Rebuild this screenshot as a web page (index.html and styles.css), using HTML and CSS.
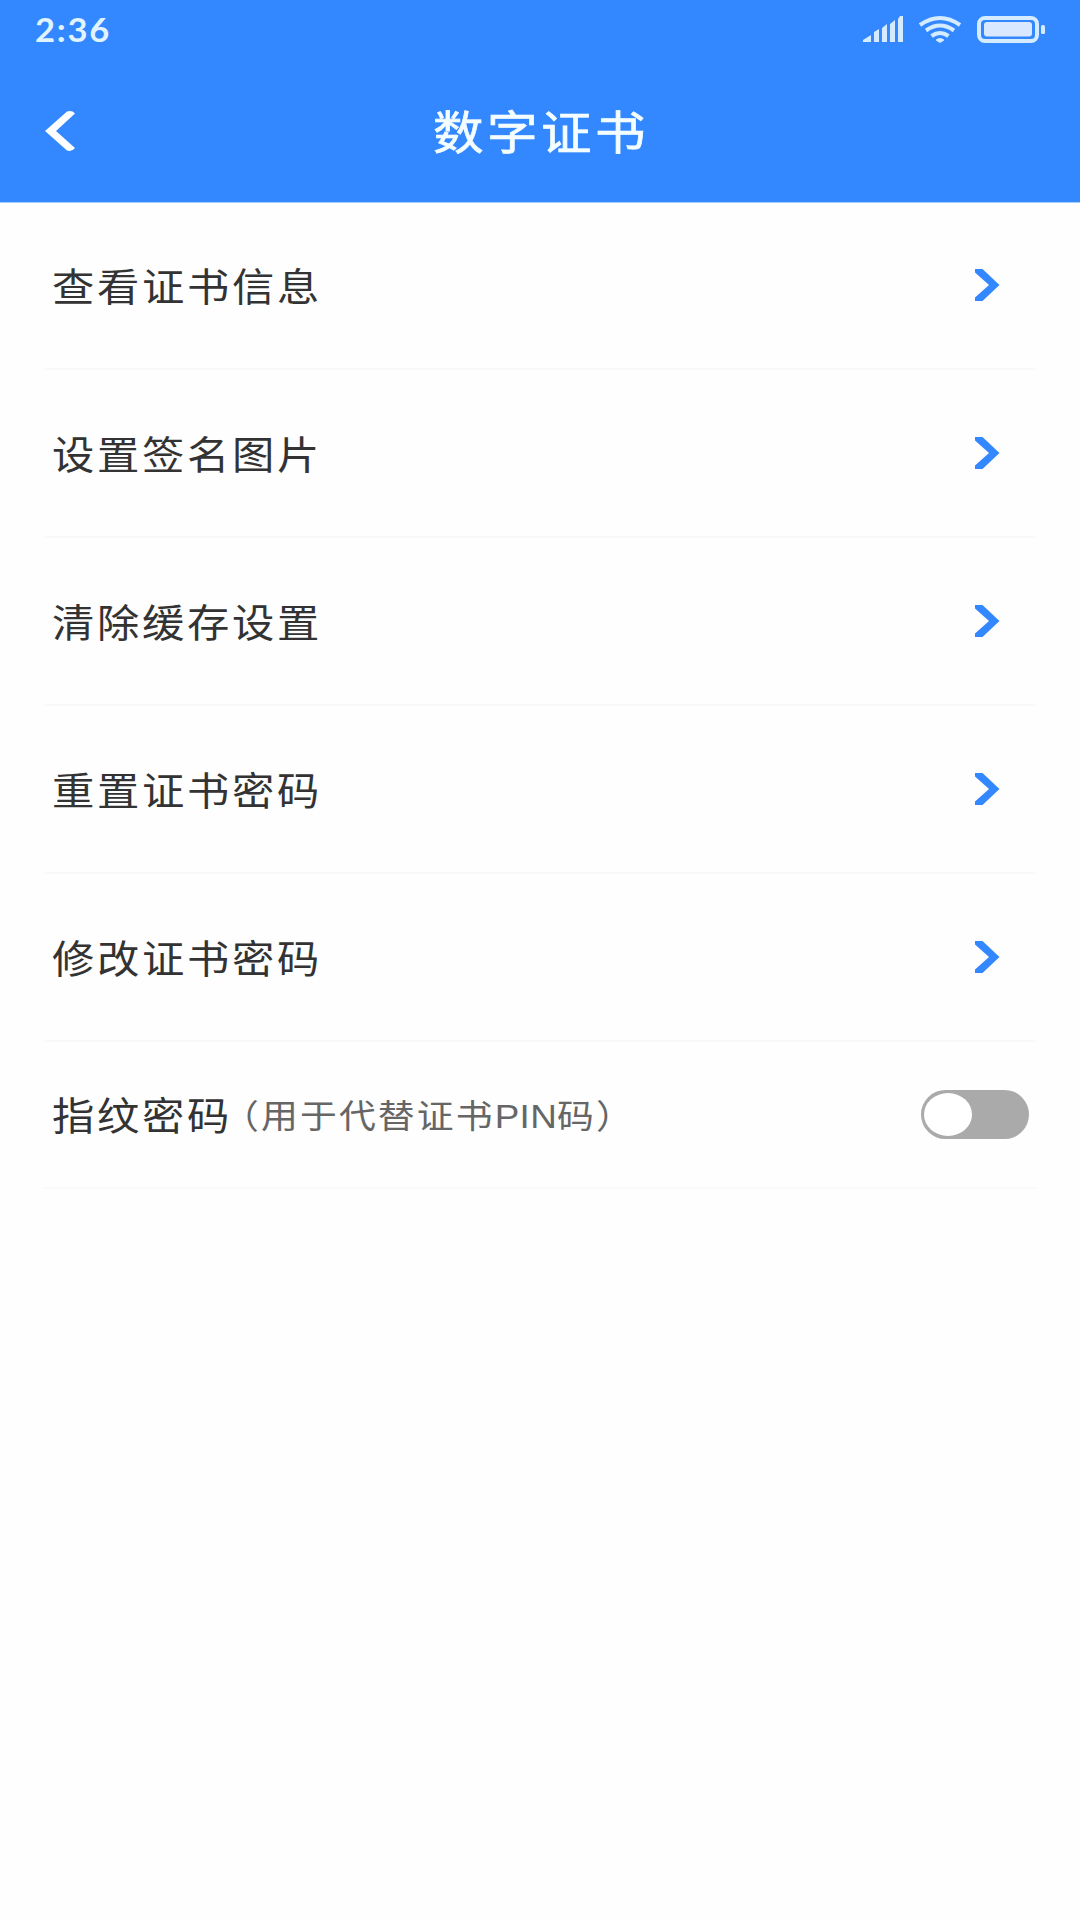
FILE: index.html
```html
<!DOCTYPE html>
<html lang="zh-CN">
<head>
    <meta charset="UTF-8">
    <title>数字证书</title>
    <link rel="stylesheet" href="styles.css">
</head>
<body>
    <header class="header">
        <div class="status">
            <span class="time">2:36</span>
            <svg class="status-icons" width="184" height="30" viewBox="862 14 184 30">
                <!--信号-->
                <path fill="#d5ebff" d="M863 42v-2l8-5v7zM874 42v-10l5-3v13zM882 42v-14l5-4v18zM890 42v-18l5-4v22zM898 42v-23l2-3h3v26z"/>
                <!--wifi-->
                <g fill="none" stroke="#d5ebff" stroke-width="4">
                    <path d="M920 25q20-14 40 0M926 30.500q14-10 28 0M931.500 36q8.500-6 17 0"/>
                </g>
                <path fill="#d5ebff" d="M936 39.500q4-3 8 0v1l-4 2.500l-4-2.500z"/>
                <!--电池-->
                <rect x="979" y="18" width="58" height="23" rx="6" fill="none" stroke="#d5ebff" stroke-width="4"/>
                <rect x="984" y="22" width="48" height="14.500" rx="3" fill="#d9e8ff"/>
                <rect x="1041" y="25" width="4" height="9" rx="1.500" fill="#d5ebff"/>
            </svg>
        </div>
        <div class="nav">
            <svg class="back" width="32" height="42" viewBox="0 0 32 42">
                <path fill="#fff" d="M0 21L22 1.500Q27 0 30 3.500L11 21L30 38Q27 42 22 40.500z"/>
            </svg>
            <h1 class="title">数字证书</h1>
        </div>
    </header>

    <ul class="list">
        <li class="row">
            <span class="label">查看证书信息</span>
            <svg class="arrow" width="26" height="34" viewBox="0 0 26 34"><path d="M1 1h7.500l17 16l-17 16h-7.500v-3.500l14-12.500l-14-12.500z"/></svg>
        </li>
        <li class="row">
            <span class="label">设置签名图片</span>
            <svg class="arrow" width="26" height="34" viewBox="0 0 26 34"><path d="M1 1h7.500l17 16l-17 16h-7.500v-3.500l14-12.500l-14-12.500z"/></svg>
        </li>
        <li class="row">
            <span class="label">清除缓存设置</span>
            <svg class="arrow" width="26" height="34" viewBox="0 0 26 34"><path d="M1 1h7.500l17 16l-17 16h-7.500v-3.500l14-12.500l-14-12.500z"/></svg>
        </li>
        <li class="row">
            <span class="label">重置证书密码</span>
            <svg class="arrow" width="26" height="34" viewBox="0 0 26 34"><path d="M1 1h7.500l17 16l-17 16h-7.500v-3.500l14-12.500l-14-12.500z"/></svg>
        </li>
        <li class="row">
            <span class="label">修改证书密码</span>
            <svg class="arrow" width="26" height="34" viewBox="0 0 26 34"><path d="M1 1h7.500l17 16l-17 16h-7.500v-3.500l14-12.500l-14-12.500z"/></svg>
        </li>
        <li class="row row-switch">
            <span class="label">指纹密码<small class="tip">（用于代替证书<span class="pin">PIN</span>码）</small></span>
            <span class="switch"><i class="knob"></i></span>
        </li>
    </ul>
</body>
</html>
```
FILE: styles.css
```css
html,body,h1,ul,li{ margin: 0; padding: 0;}
body{ height: 1920px; background: #fefefe; font-family: "Liberation Sans","Noto Sans CJK SC",sans-serif;}
svg{ display: block;}

.header{ height: 203px; background: #3388ff; border-bottom: 1px solid #a9cdfb; box-sizing: border-box;}
.status{ display: flex; justify-content: space-between; height: 60px; padding: 0 34px 0 35px;}
.time{ line-height: 59px; font-family: Lato,sans-serif; font-size: 32px; font-weight: bold; letter-spacing: 1.6px; color: #e0f3ff; transform: scaleX(1.08); transform-origin: 0 50%;}
.status-icons{ margin-top: 14px;}
.nav{ display: grid; grid-template-columns: 32px 1fr 32px; align-items: center; height: 142px; padding: 0 45px;}
.back{ margin-bottom: 1px;}
.title{ padding: 4px 0 0 2px; text-align: center; font-size: 46px; font-weight: normal; line-height: 72px; letter-spacing: 3.1px; color: #f4fdff; -webkit-text-stroke: 0.7px #f4fdff; transform: scaleX(1.1);}

.list{ padding: 0 45px; list-style: none; margin-top: -1px;}
.row{ display: flex; justify-content: space-between; align-items: center; height: 168px; padding: 0 35px 0 7px; border-bottom: 2px solid #f9f9f9; box-sizing: border-box;}
/*字形横向略宽*/
.label{ padding-top: 5px; font-size: 38.5px; line-height: 60px; letter-spacing: 2.4px; color: #333; white-space: nowrap; transform: scaleX(1.1); transform-origin: 0 50%;}
.arrow{ fill: #3388ff;}
.row-switch{ height: 147px; padding-right: 6px;}
.tip{ margin-left: -9px; font-size: 33.5px; letter-spacing: 1.9px; color: #666; vertical-align: 2px;}
.pin{ letter-spacing: 0.3px;}
.switch{ width: 108px; height: 49px; padding: 3px; background: #aaa; border-radius: 24.5px; box-sizing: border-box;}
.knob{ display: block; width: 48px; height: 43px; background: #fff; border-radius: 50%;}
```
